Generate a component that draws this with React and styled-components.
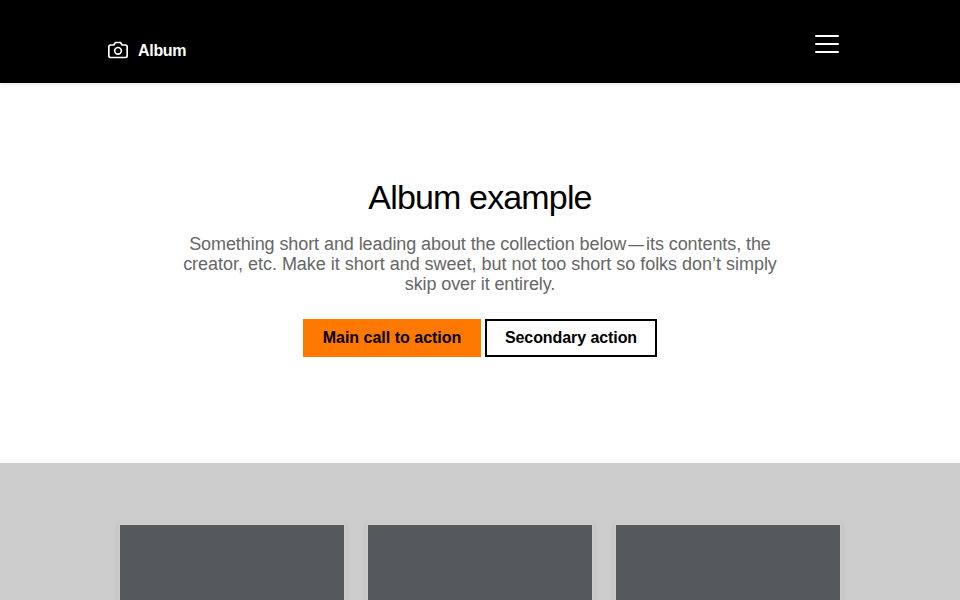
import React from "react";
import styled, { createGlobalStyle } from "styled-components";

const GlobalStyle = createGlobalStyle`
  *, *::before, *::after { box-sizing: border-box; }
  body {
    margin: 0;
    height: 600px;
    overflow: hidden;
    background: #fff;
    color: #000;
    font-family: "Liberation Sans", Arial, sans-serif;
    font-size: 16px;
    line-height: 1.125;
    -webkit-font-smoothing: antialiased;
  }
`;
const Header = styled.header`
  height: 83px;
  background: #000;
  box-shadow: 0 2px 4px rgba(0, 0, 0, 0.075);
`;
const Bar = styled.div`
  width: 744px;
  height: 83px;
  margin: 0 auto;
  display: flex;
  justify-content: space-between;
`;
const Brand = styled.a`
  display: flex;
  align-items: center;
  height: 20px;
  margin-top: 40px;
  color: #fff;
  font-weight: 700;
  svg { display: block; margin-right: 10px; }
`;
const BrandName = styled.strong`
  width: 49px;
  padding-top: 2px;
  white-space: nowrap;
  letter-spacing: -0.3px;
`;
const Toggle = styled.button`
  width: 24px;
  height: 18px;
  margin: 35px 13px 0 0;
  padding: 0;
  border: 0;
  background: none;
  display: flex;
  flex-direction: column;
  justify-content: space-between;
`;
const ToggleBar = styled.span`
  width: 24px;
  height: 2px;
  border-radius: 1px;
  background: #fff;
`;
const Hero = styled.section`
  height: 380px;
  padding-top: 96px;
  display: flex;
  flex-direction: column;
  align-items: center;
`;
const Title = styled.h1`
  margin: 0;
  font-size: 34px;
  font-weight: 400;
  line-height: 36px;
  letter-spacing: -0.85px;
`;
const Lead = styled.p`
  margin: 19px 0 0;
  color: #666;
  font-size: 18px;
  line-height: 20px;
  text-align: center;
`;
const Line = styled.span`
  display: block;
  white-space: nowrap;
  letter-spacing: ${(p) => p.$tracking}px;
`;
const Dash = styled.span`
  display: inline-block;
  padding: 0 1px;
  transform: scaleX(0.87);
`;
const Actions = styled.div`
  display: flex;
  gap: 4px;
  margin-top: 25px;
`;
const Action = styled.a`
  width: ${(p) => p.$width}px;
  height: 38px;
  border: 2px solid ${(p) => (p.$primary ? "#ff7900" : "#000")};
  background: ${(p) => (p.$primary ? "#ff7900" : "#fff")};
  font-weight: 700;
  line-height: 34px;
  text-align: center;
  white-space: nowrap;
  letter-spacing: ${(p) => (p.$primary ? 0 : -0.08)}px;
`;
const Album = styled.section`
  height: 137px;
  padding-top: 60px;
  background: #ccc;
  overflow: hidden;
`;
const Grid = styled.div`
  width: 724px;
  margin: 0 auto;
  display: grid;
  grid-template-columns: repeat(3, 1fr);
  gap: 20px;
`;
const Card = styled.article`
  height: 225px;
  border: 2px solid #ccc;
  background: #55595c;
  box-shadow: 0 2px 4px rgba(0, 0, 0, 0.075);
`;

export default function App() {
  return (
    <>
      <GlobalStyle />
      <Header>
        <Bar>
          <Brand>
            <svg width="20" height="20" viewBox="0 0 24 24" fill="none" stroke="#fff" strokeWidth="2" strokeLinecap="round" strokeLinejoin="round">
              <path d="M23 19a2 2 0 0 1-2 2H3a2 2 0 0 1-2-2V8a2 2 0 0 1 2-2h4l2-3h6l2 3h4a2 2 0 0 1 2 2z" />
              <circle cx="12" cy="13" r="4" />
            </svg>
            <BrandName>Album</BrandName>
          </Brand>
          <Toggle aria-label="Toggle navigation">
            <ToggleBar />
            <ToggleBar />
            <ToggleBar />
          </Toggle>
        </Bar>
      </Header>
      <main>
        <Hero>
          <Title>Album example</Title>
          <Lead>
            <Line $tracking={-0.08}>Something short and leading about the collection below<Dash>—</Dash>its contents, the</Line>
            <Line $tracking={-0.02}>creator, etc. Make it short and sweet, but not too short so folks don’t simply</Line>
            <Line $tracking={-0.11}>skip over it entirely.</Line>
          </Lead>
          <Actions>
            <Action $primary $width={178}>Main call to action</Action>
            <Action $width={172}>Secondary action</Action>
          </Actions>
        </Hero>
        <Album>
          <Grid>
            <Card />
            <Card />
            <Card />
          </Grid>
        </Album>
      </main>
    </>
  );
}
